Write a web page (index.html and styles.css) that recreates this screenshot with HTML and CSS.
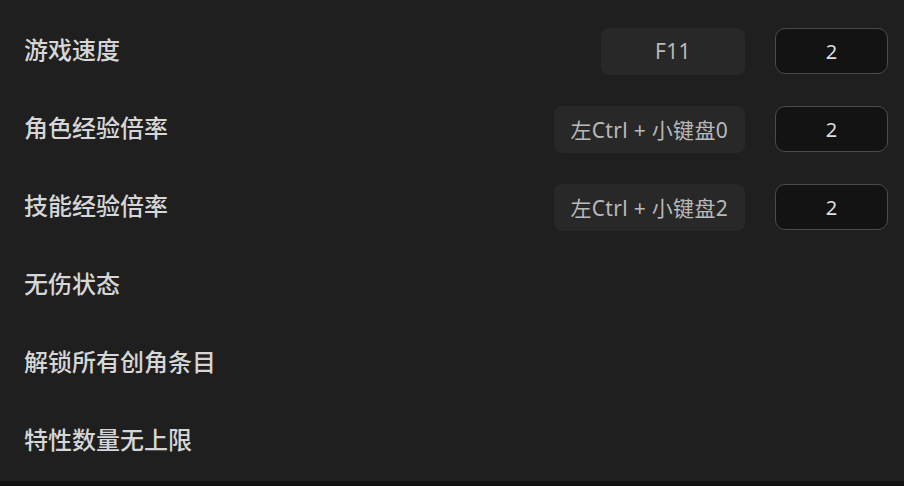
FILE: index.html
```html
<!DOCTYPE html>
<html lang="zh-CN">
<head>
    <meta charset="UTF-8">
    <meta name="viewport" content="width=device-width, initial-scale=1.0">
    <title>设置</title>
    <link rel="stylesheet" href="styles.css">
</head>
<body>
    <div class="panel">
        <div class="row">
            <span class="label">游戏速度</span>
            <div class="controls">
                <span class="hotkey wide">F11</span>
                <input class="value" type="text" value="2">
            </div>
        </div>
        <div class="row">
            <span class="label">角色经验倍率</span>
            <div class="controls">
                <span class="hotkey">左Ctrl + 小键盘0</span>
                <input class="value" type="text" value="2">
            </div>
        </div>
        <div class="row">
            <span class="label">技能经验倍率</span>
            <div class="controls">
                <span class="hotkey">左Ctrl + 小键盘2</span>
                <input class="value" type="text" value="2">
            </div>
        </div>
        <div class="row">
            <span class="label">无伤状态</span>
        </div>
        <div class="row">
            <span class="label">解锁所有创角条目</span>
        </div>
        <div class="row">
            <span class="label">特性数量无上限</span>
        </div>
    </div>
</body>
</html>
```

FILE: styles.css
```css
body {
    margin: 0;
    background: #131313;
    font-family: "Noto Sans", "Noto Sans CJK SC", sans-serif;
    overflow: hidden;
}
.panel {
    background: #1f1f1f;
    height: 481px;
    box-sizing: border-box;
    padding: 12px 16px 0 24px;
}
.row {
    height: 78px;
    display: flex;
    align-items: center;
    justify-content: space-between;
}
.label {
    font-size: 24px;
    font-weight: 500;
    color: #d6d6d6;
    margin-top: -5px;
}
.controls {
    display: flex;
    align-items: center;
    gap: 30px;
}
.hotkey {
    display: flex;
    align-items: center;
    justify-content: center;
    height: 47px;
    padding: 0 17px;
    box-sizing: border-box;
    background: #282828;
    border-radius: 8px;
    font-size: 21px;
    letter-spacing: 0.3px;
    color: #b9b9b9;
}
.hotkey.wide {
    min-width: 144px;
}
.value {
    width: 113px;
    height: 46px;
    box-sizing: border-box;
    background: #131313;
    border: 1px solid #4b4b4b;
    border-radius: 10px;
    color: #dedede;
    font-family: inherit;
    font-size: 20px;
    text-align: center;
    outline: none;
}
```
